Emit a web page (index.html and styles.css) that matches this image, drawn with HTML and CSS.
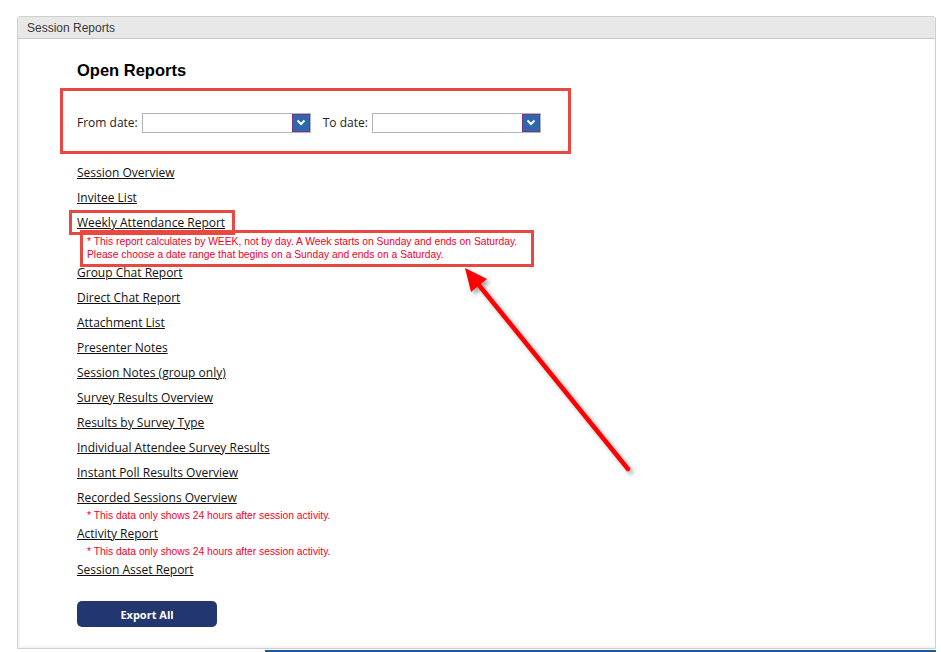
FILE: index.html
```html
<!DOCTYPE html>
<html lang="en">
<head>
    <meta charset="UTF-8">
    <title>Session Reports</title>
    <link rel="stylesheet" href="styles.css">
</head>
<body>
    <div class="panel">
        <div class="panel-head">Session Reports</div>
        <div class="panel-body">
            <h2>Open Reports</h2>

            <div class="filter mark">
                <label for="from-date">From date:</label>
                <div class="date-select" id="from-date">
                    <span class="drop"><svg width="10" height="7" viewBox="0 0 10 7"><path d="M1.5 1.5 L5 5 L8.5 1.5" fill="none" stroke="#fff" stroke-width="2"/></svg></span>
                </div>
                <label for="to-date">To date:</label>
                <div class="date-select" id="to-date">
                    <span class="drop"><svg width="10" height="7" viewBox="0 0 10 7"><path d="M1.5 1.5 L5 5 L8.5 1.5" fill="none" stroke="#fff" stroke-width="2"/></svg></span>
                </div>
            </div>

            <ul class="reports">
                <li><a href="#">Session Overview</a></li>
                <li><a href="#">Invitee List</a></li>
                <li><a href="#" class="boxed">Weekly Attendance Report</a></li>
                <li class="note note-boxed">* This report calculates by WEEK, not by day. A Week starts on Sunday and ends on Saturday.<br>Please choose a date range that begins on a Sunday and ends on a Saturday.</li>
                <li><a href="#">Group Chat Report</a></li>
                <li><a href="#">Direct Chat Report</a></li>
                <li><a href="#">Attachment List</a></li>
                <li><a href="#">Presenter Notes</a></li>
                <li><a href="#">Session Notes (group only)</a></li>
                <li><a href="#">Survey Results Overview</a></li>
                <li><a href="#">Results by Survey Type</a></li>
                <li><a href="#">Individual Attendee Survey Results</a></li>
                <li><a href="#">Instant Poll Results Overview</a></li>
                <li><a href="#">Recorded Sessions Overview</a></li>
                <li class="note">* This data only shows 24 hours after session activity.</li>
                <li><a href="#">Activity Report</a></li>
                <li class="note">* This data only shows 24 hours after session activity.</li>
                <li><a href="#">Session Asset Report</a></li>
            </ul>

            <button class="export-button">Export All</button>
        </div>
    </div>
    <div class="under-bar"></div>

    <!-- annotation arrow drawn over the page -->
    <svg class="arrow" width="941" height="652" viewBox="0 0 941 652">
        <defs>
            <filter id="shade" x="-20%" y="-20%" width="140%" height="140%">
                <feDropShadow dx="3" dy="3" stdDeviation="2" flood-color="#000" flood-opacity="0.35"/>
            </filter>
        </defs>
        <g filter="url(#shade)">
            <line x1="628" y1="469" x2="478" y2="284" stroke="#f00" stroke-width="4.5" stroke-linecap="round"/>
            <polygon points="465,268 487,279 471,292" fill="#f00"/>
        </g>
    </svg>
</body>
</html>
```

FILE: styles.css
```css
body {
    margin: 0;
    padding: 16px 5px 0 17px;
    background: #fff;
    font-family: 'Open Sans', 'Liberation Sans', sans-serif;
    font-size: 12px;
    color: #111;
}
.panel {
    width: 917px;
    height: 631px;
    border: 1px solid #cfcfcf;
    border-radius: 3px 3px 0 0;
    box-shadow: inset 2px -2px 0 #f4f4f4;
}
.panel-head {
    height: 19px;
    padding-top: 2px;
    line-height: 19px;
    padding-left: 9px;
    background-color: #e8e8e8;
    border-bottom: 1px solid #c9c9c9;
    font-family: 'Liberation Sans', sans-serif;
    color: #3a3a3a;
}
.panel-body {
    padding: 21px 0 0 59px;
}
h2 {
    margin: 0 0 8px;
    font-family: 'Liberation Sans', sans-serif;
    font-size: 16.5px;
    line-height: 20px;
    font-weight: bold;
    color: #000;
}
.mark {
    border: 3px solid #e8483f;
}
.filter {
    display: flex;
    align-items: center;
    width: 491px;
    height: 57px;
    margin-left: -17px;
    padding: 3px 0 0 14px;
}
.filter label {
    margin-right: 4px;
    color: #222;
}
.date-select {
    display: flex;
    justify-content: flex-end;
    width: 167px;
    height: 18px;
    border: 1px solid #b4b4b4;
    background: #fff;
    margin-right: 12px;
}
.drop {
    display: flex;
    align-items: center;
    justify-content: center;
    width: 16px;
    height: 16px;
    background-color: #2d68ac;
    border: 1px solid #7d2f8c;
}
.reports {
    list-style: none;
    margin: 6px 0 0;
    padding: 0;
}
.reports li {
    line-height: 25px;
}
.reports a {
    color: #111;
    text-decoration: underline;
}
.boxed {
    outline: 3px solid #e8483f;
    padding: 1px 7px 1px 5px;
    margin-left: -5px;
}
.note {
    padding-left: 10px;
    font-family: 'Liberation Sans', sans-serif;
    font-size: 10.3px;
    color: #f2002a;
}
.reports li.note {
    line-height: 13px;
    margin-top: -1px;
    margin-bottom: -1px;
}
.reports li.note-boxed {
    width: 444px;
    margin-left: 6px;
    padding: 2px 0 3px 4px;
    margin-top: -2px;
    margin-bottom: -4px;
    outline: 3px solid #e8483f;
}
.export-button {
    display: block;
    width: 140px;
    height: 26px;
    margin-top: 19px;
    background-color: #22376f;
    color: #fff;
    font-family: 'Open Sans', sans-serif;
    font-size: 11px;
    font-weight: bold;
    border: none;
    border-radius: 5px;
    cursor: pointer;
}
.under-bar {
    height: 2px;
    margin: 1px 0 0 248px;
    background-color: #1e5a9a;
}
.arrow {
    position: absolute;
    left: 0;
    top: 0;
    pointer-events: none;
}
```
